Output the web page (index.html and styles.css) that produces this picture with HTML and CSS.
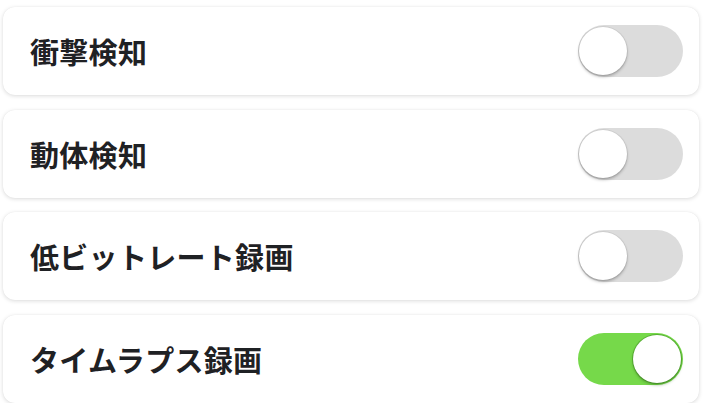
FILE: index.html
```html
<!DOCTYPE html>
<html lang="ja">
<head>
<meta charset="utf-8">
<link rel="stylesheet" href="styles.css">
</head>
<body>
<div class="list">
  <div class="card"><span class="label">衝撃検知</span><span class="toggle"><span class="knob"></span></span></div>
  <div class="card"><span class="label">動体検知</span><span class="toggle"><span class="knob"></span></span></div>
  <div class="card"><span class="label">低ビットレート録画</span><span class="toggle"><span class="knob"></span></span></div>
  <div class="card"><span class="label">タイムラプス録画</span><span class="toggle on"><span class="knob"></span></span></div>
</div>
</body>
</html>
```
FILE: styles.css
```css
html, body { margin: 0; padding: 0; background: #ffffff; }
body { font-family: "Noto Sans CJK JP", "Noto Sans", sans-serif; }
.list {
  display: flex;
  flex-direction: column;
  gap: 14.7px;
  padding: 7px 9px 0 3px;
}
.card {
  height: 88px;
  box-sizing: border-box;
  background: #fff;
  border-radius: 12px;
  box-shadow: 0 1px 4px rgba(0,0,0,0.14), 0 0 1px rgba(0,0,0,0.08);
  display: flex;
  align-items: center;
  justify-content: space-between;
  padding: 0 16px 0 27px;
}
.label {
  font-size: 29px;
  font-weight: 700;
  color: #1f2124;
  letter-spacing: 0.3px;
}
.toggle {
  width: 105px;
  height: 52px;
  border-radius: 26px;
  background: #dcdcdc;
  display: flex;
  align-items: center;
  padding: 0 1px;
  box-sizing: border-box;
}
.knob {
  width: 48px;
  height: 48px;
  border-radius: 50%;
  background: #fff;
  box-shadow: 0 2px 3px rgba(0,0,0,0.25), 0 0 0 1px rgba(0,0,0,0.06);
}
.toggle.on {
  background: #76d94a;
  justify-content: flex-end;
  padding: 0 2px;
}
.toggle.on .knob {
  box-shadow: 0 2px 3px rgba(40,90,20,0.45), 0 0 0 1px rgba(60,140,30,0.5);
}
```
